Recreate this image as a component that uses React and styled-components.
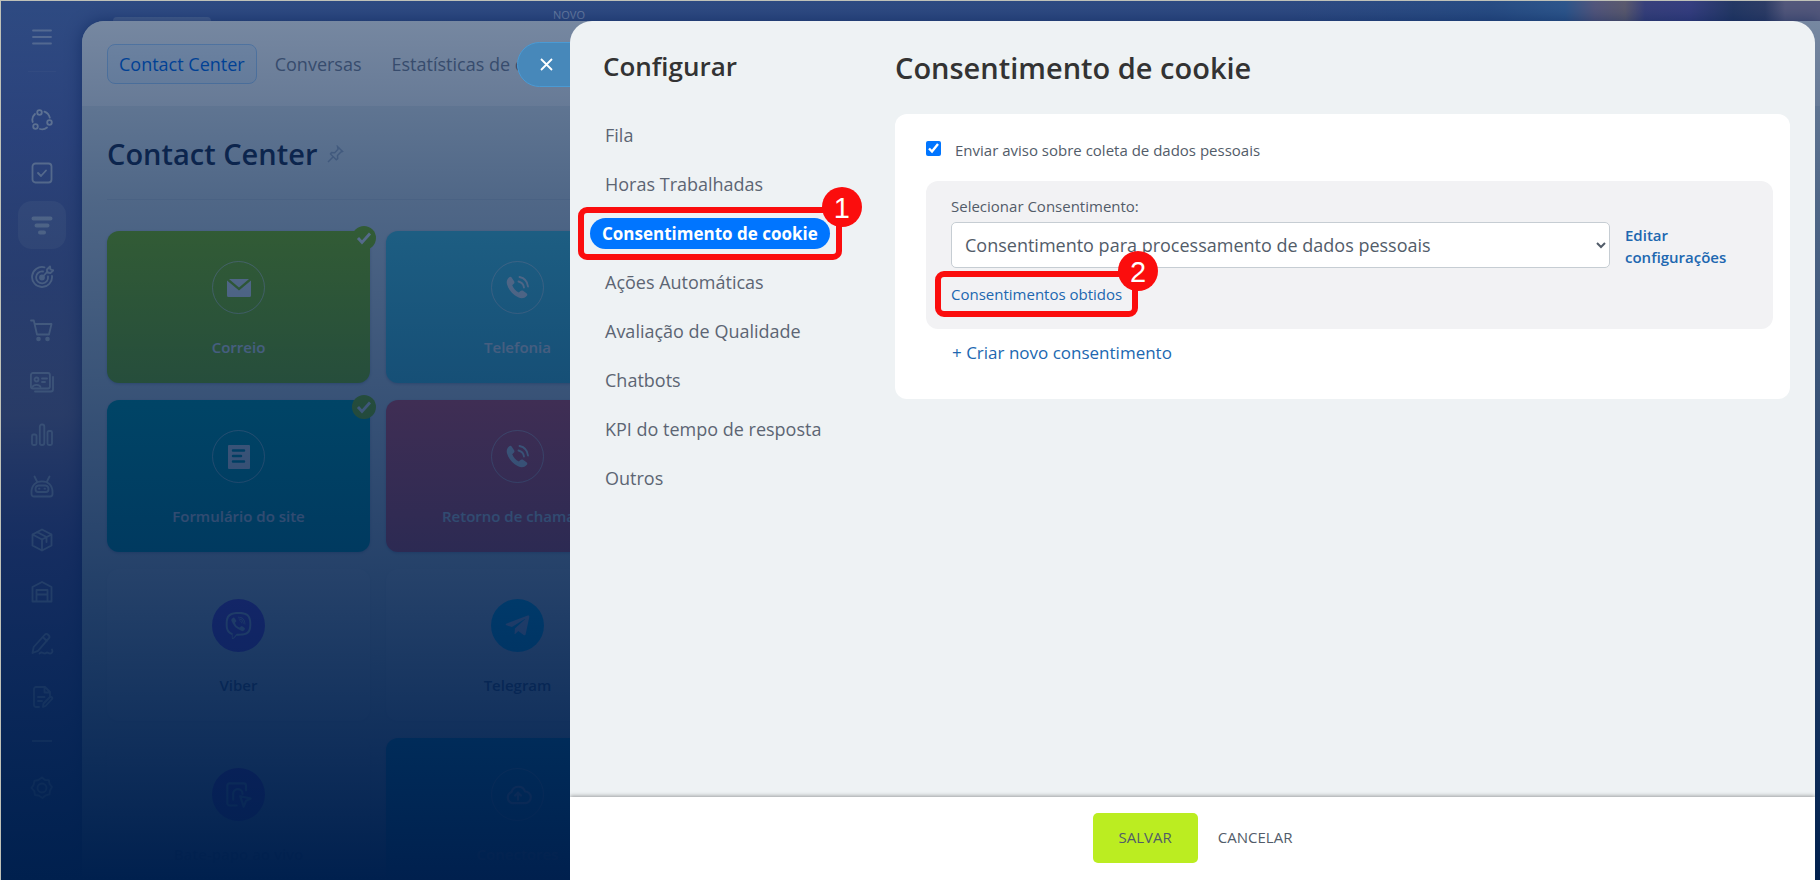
import React from 'react';
import styled, { createGlobalStyle } from 'styled-components';
import { FaViber, FaTelegramPlane } from 'react-icons/fa';

const GlobalStyle = createGlobalStyle`
  *, *::before, *::after {
    box-sizing: border-box;
  }
  body {
    margin: 0;
    font-family: 'Open Sans', 'Noto Sans', sans-serif;
    color: #525c69;
    background: #00204e;
  }
  h1, h2, p, ul {
    margin: 0;
    padding: 0;
  }
  a {
    text-decoration: none;
  }
`;

const Page = styled.div`
  position: relative;
  display: flex;
  height: 100vh;
  overflow: hidden;
  border-top: 1px solid #bfc1b8;
  border-left: 1px solid #bfc1b8;
  background:
    linear-gradient(
      180deg,
      #b9a5c4 0,
      #b59cb2 70px,
      #4a4a40 82px,
      #4a4a48 116px,
      #a68fb8 125px,
      #8a5c9c 170px,
      #4a5aa8 220px,
      #50609a 380px,
      #6070b0 100%
    ) right 0 top 20px / 6px 100% no-repeat,
    linear-gradient(
      90deg,
      transparent 0,
      #5078b8 200px,
      #5a8cc8 275px,
      #a88ca8 305px,
      #b8948c 335px,
      #7060a8 355px,
      #6c5cb0 400px,
      #485078 443px,
      #5a587c 475px,
      #a890a8 495px,
      #a890a8 530px
    ) right 0 top 0 / 530px 20px no-repeat,
    linear-gradient(180deg, #5c74b4 0, #6a74bc 15%, #807cb4 32%, #a890b0 47%, #7a68b0 62%, #6068b0 100%);
`;

const Shade = styled.div`
  position: absolute;
  inset: 0;
  pointer-events: none;
  background: linear-gradient(
    180deg,
    rgba(0, 33, 80, 0.5) 0,
    rgba(0, 33, 80, 0.65) 23%,
    rgba(0, 33, 80, 0.73) 40%,
    rgba(0, 33, 80, 0.82) 61%,
    rgba(0, 33, 80, 0.91) 80%,
    rgba(0, 32, 78, 1) 100%
  );
`;

const Rail = styled.nav`
  display: flex;
  flex-direction: column;
  align-items: center;
  flex: 0 0 81px;
  padding-top: 20px;
`;

const RailButton = styled.button`
  display: flex;
  align-items: center;
  justify-content: center;
  width: 48px;
  height: ${(p) => p.$height || 48}px;
  padding: 0;
  border: 0;
  border-radius: 14px;
  color: #fff;
  opacity: ${(p) => p.$opacity || 0.8};
  background: ${(p) => (p.$active ? 'rgba(255, 255, 255, 0.22)' : 'transparent')};
`;

const RailLine = styled.div`
  width: 28px;
  height: 1px;
  margin-top: 18px;
  background: rgba(255, 255, 255, 0.08);
`;

const RailMore = styled.div`
  width: 20px;
  height: 2px;
  background: rgba(255, 255, 255, 0.8);
`;

const RailList = styled.ul`
  display: flex;
  flex-direction: column;
  flex: 1;
  margin-top: 22px;
  list-style: none;
`;

const RailItem = styled.li`
  display: flex;
  align-items: center;
  flex: 1;
`;

const RailFooter = styled.div`
  display: flex;
  flex-direction: column;
  align-items: center;
  height: 157px;
  padding-top: 17px;
  gap: 22px;
`;

const Workspace = styled.div`
  display: flex;
  flex-direction: column;
  flex: 1;
  min-width: 0;
`;

const TopBar = styled.div`
  display: flex;
  align-items: flex-end;
  height: 20px;
  padding-left: 31px;
`;

const TopField = styled.div`
  width: 98px;
  height: 4px;
  border-radius: 4px 4px 0 0;
  background: rgba(255, 255, 255, 0.3);
`;

const TopLabel = styled.span`
  margin-left: 342px;
  font-size: 11px;
  line-height: 12px;
  color: #d3dbf4;
`;

const Center = styled.section`
  flex: 1;
  overflow: hidden;
  border-top-left-radius: 22px;
  background: #e2e8ec;
  box-shadow: 0 0 16px rgba(0, 20, 80, 0.5);
`;

const CenterHeader = styled.header`
  display: flex;
  align-items: center;
  gap: 6px;
  height: 85px;
  padding: 0 25px;
  background: #f4f5f7;
  white-space: nowrap;
`;

const CenterTab = styled.a`
  padding: 6px 11px;
  border: 1px solid ${(p) => (p.$active ? '#a8d0fa' : 'transparent')};
  border-radius: 8px;
  font-size: 18px;
  line-height: 26px;
  color: ${(p) => (p.$active ? '#0068e8' : '#7a8090')};
  background: ${(p) => (p.$active ? '#e4effb' : 'transparent')};
`;

const CenterTitle = styled.div`
  display: flex;
  align-items: center;
  gap: 10px;
  height: 94px;
  margin: 0 25px;
  padding-top: 3px;
  border-bottom: 1px solid #d3dae2;

  h1 {
    font-size: 29px;
    font-weight: 600;
    line-height: 40px;
    color: #1f2b48;
  }
`;

const Tiles = styled.div`
  display: grid;
  grid-template-columns: repeat(2, 263px);
  grid-auto-rows: 152px;
  gap: 17px 16px;
  padding: 31px 25px 0;
`;

const Tile = styled.article`
  position: relative;
  display: flex;
  flex-direction: column;
  align-items: center;
  padding-top: 30px;
  border-radius: 12px;
  font-size: 15px;
  font-weight: 600;
  line-height: 20px;
  color: ${(p) => (p.$plain ? '#48587c' : '#fff')};
  background: ${(p) => p.$color};
  box-shadow: 0 1px 3px rgba(0, 20, 80, ${(p) => (p.$plain ? 0.08 : 0.25)});
`;

const TileIcon = styled.div`
  display: flex;
  align-items: center;
  justify-content: center;
  width: 53px;
  height: 53px;
  margin-bottom: 23px;
  border: 1px solid ${(p) => (p.$fill ? 'transparent' : 'rgba(255, 255, 255, 0.6)')};
  border-radius: 50%;
  color: ${(p) => (p.$fill ? '#dde4ff' : '#fff')};
  background: ${(p) => p.$fill || 'transparent'};
`;

const TileCheck = styled.span`
  position: absolute;
  top: -5px;
  right: -6px;
  display: flex;
  align-items: center;
  justify-content: center;
  width: 24px;
  height: 24px;
  border-radius: 50%;
  background: #94cf00;
`;

const CloseButton = styled.button`
  position: absolute;
  top: 41px;
  left: 516px;
  display: flex;
  align-items: center;
  width: 60px;
  height: 45px;
  padding: 0 0 0 22px;
  border: 1px solid #4a9ad4;
  border-radius: 23px 0 0 23px;
  color: #fff;
  background: #4788ba;
`;

const Sheet = styled.section`
  position: absolute;
  top: 20px;
  right: 5px;
  bottom: 0;
  left: 569px;
  display: flex;
  flex-direction: column;
  overflow: hidden;
  border-radius: 22px 22px 0 0;
  background: #eef2f4;
`;

const SheetBody = styled.div`
  display: flex;
  flex: 1;
  padding: 27px 25px 0 0;
`;

const SideNav = styled.aside`
  flex: 0 0 325px;
  padding-left: 20px;

  h2 {
    margin: 0 0 27px 13px;
    font-size: 26px;
    font-weight: 600;
    line-height: 36px;
    color: #333;
  }
`;

const NavList = styled.ul`
  list-style: none;
`;

const NavItem = styled.li`
  display: flex;
  align-items: center;
  height: 49px;
`;

const NavLink = styled.a`
  position: relative;
  padding: 0 ${(p) => (p.$active ? 12 : 15)}px;
  border-radius: 16px;
  font-size: ${(p) => (p.$active ? 17 : 18)}px;
  font-weight: ${(p) => (p.$active ? 700 : 400)};
  line-height: 31px;
  white-space: nowrap;
  color: ${(p) => (p.$active ? '#fff' : '#5c6573')};
  background: ${(p) => (p.$active ? '#0075ff' : 'transparent')};
`;

const Callout = styled.span`
  position: absolute;
  inset: ${(p) => p.$inset};
  border: 6px solid #fb0d0d;
  border-radius: 9px;
  pointer-events: none;
`;

const CalloutNumber = styled.span`
  position: absolute;
  top: -26px;
  right: -26px;
  width: 40px;
  height: 40px;
  border-radius: 50%;
  font-family: 'Liberation Sans', Arial, sans-serif;
  font-size: 29px;
  font-weight: 400;
  line-height: 42px;
  text-align: center;
  color: #fff;
  background: #fb0d0d;
`;

const Content = styled.main`
  flex: 1;
  min-width: 0;

  h1 {
    margin-bottom: 26px;
    font-size: 29px;
    font-weight: 600;
    line-height: 40px;
    color: #333;
  }
`;

const Card = styled.form`
  padding: 24px 17px 34px 31px;
  border-radius: 12px;
  background: #fff;
`;

const CheckRow = styled.label`
  display: flex;
  align-items: center;
  gap: 14px;
  font-size: 15px;
  line-height: 24px;

  input {
    width: 15px;
    height: 15px;
    margin: 0 0 3px;
    accent-color: #0075ff;
  }
`;

const ConsentBox = styled.div`
  margin: 19px 0 12px;
  padding: 15px 25px 25px;
  border-radius: 12px;
  font-size: 15px;
  line-height: 20px;
  background: #f2f2f4;
`;

const SelectRow = styled.div`
  display: flex;
  align-items: center;
  gap: 15px;
  margin: 6px 0 16px;
`;

const Select = styled.select`
  flex: 1;
  min-width: 0;
  height: 46px;
  padding: 0 9px;
  border: 1px solid #c6cdd3;
  border-radius: 5px;
  font-family: inherit;
  font-size: 18px;
  color: #525c69;
  background: #fff;
`;

const EditLink = styled.a`
  flex: 0 0 123px;
  padding-top: 2px;
  font-weight: 600;
  line-height: 22px;
  color: #2067b0;
`;

const TextLink = styled.a`
  position: relative;
  display: inline-block;
  color: #2067b0;
  vertical-align: top;
`;

const CreateLink = styled(TextLink)`
  margin-left: 26px;
  font-size: 17px;
  line-height: 24px;
`;

const Footer = styled.footer`
  position: relative;
  display: flex;
  align-items: center;
  justify-content: center;
  gap: 20px;
  height: 83px;
  padding-bottom: 2px;
  background: #fff;
  box-shadow: 0 -1px 4px rgba(0, 0, 0, 0.35);
`;

const FooterButton = styled.button`
  height: 50px;
  padding: 0 ${(p) => (p.$primary ? 26 : 0)}px 2px;
  border: 0;
  border-radius: 5px;
  font-family: inherit;
  font-size: 15px;
  font-weight: 500;
  color: #525c69;
  background: ${(p) => (p.$primary ? '#bbed21' : 'transparent')};
`;

const Glyph = ({ children, size = 24 }) => (
  <svg
    width={size}
    height={size}
    viewBox="0 0 24 24"
    fill="none"
    stroke="currentColor"
    strokeWidth="1.8"
    strokeLinecap="round"
    strokeLinejoin="round"
    aria-hidden="true"
  >
    {children}
  </svg>
);

const PhoneGlyph = () => (
  <svg width="28" height="28" viewBox="0 0 28 28" fill="none" aria-hidden="true">
    <path
      d="M5 3.5c1-1 2-1 2.800.2l2.300 3.600c.6 1 .4 1.800-.4 2.500l-1.500 1.400c1.300 3.300 3.400 5.600 6.600 7.300l1.700-1.500c.8-.7 1.600-.8 2.500-.2l3.500 2.500c1.100.8 1 1.900.1 2.800-2.300 2.500-5.200 2.900-8.500 1.200C8.200 20.300 4.500 15.600 3 10.300 2.300 7.500 3 5.300 5 3.500z"
      fill="currentColor"
    />
    <path
      d="M14.500 7.500c3 .7 5 2.800 5.500 6M15.500 3c4.700 1 8 4.500 8.500 9.500"
      stroke="currentColor"
      strokeWidth="1.800"
      strokeLinecap="round"
    />
  </svg>
);

const MailGlyph = () => (
  <svg width="24" height="18" viewBox="0 0 24 18" fill="currentColor" aria-hidden="true">
    <path d="M2 0h20L12 8.500z" />
    <path d="M0 1.500 12 11.500 24 1.500V16.500a1.500 1.500 0 0 1-1.500 1.500h-21A1.500 1.500 0 0 1 0 16.500z" />
  </svg>
);

const FormGlyph = () => (
  <svg width="22" height="24" viewBox="0 0 22 24" aria-hidden="true">
    <rect width="22" height="24" rx="1" fill="currentColor" />
    <path d="M5 5.500h11M5 11h8M5 16.500h11" stroke="#00a5a5" strokeWidth="2.500" strokeLinecap="round" />
  </svg>
);

const CheckGlyph = () => (
  <svg width="16" height="14" viewBox="0 0 16 14" fill="none" aria-hidden="true">
    <path d="M2 7l4 4.500L14 2.500" stroke="#fff" strokeWidth="2.800" />
  </svg>
);

const PinGlyph = () => (
  <svg width="17" height="18" viewBox="0 0 17 18" fill="none" stroke="#a9b4c6" strokeWidth="1.500" aria-hidden="true">
    <path d="M10.500 1.500l5 5-1.500.5-3.500 3.500.2 3.200-1.400 1L3.500 9l1-1.400 3.200.2L11 4.200zM6 12l-5 5" />
  </svg>
);

const railIcons = [
  {
    name: 'Colaboração',
    icon: (
      <>
        <circle cx="9.500" cy="4.500" r="2.300" />
        <circle cx="19.500" cy="14.500" r="2.300" />
        <circle cx="5.500" cy="18.500" r="2.300" />
        <path d="M14.500 3.700a9 9 0 0 1 5.300 6M17 19.500c-2 1.700-4.500 2.200-7 1.500M2.700 14C1.800 11 2.800 8 5 6" />
      </>
    ),
  },
  { name: 'Tarefas', icon: <><rect x="2.500" y="2.500" width="19" height="19" rx="3" /><path d="M8 12l3 3 5-5.500" /></> },
  {
    name: 'CRM',
    active: true,
    icon: <path d="M3.500 5.500h17M6.500 12.500h11M10 19.500h4" strokeWidth="4" />,
  },
  {
    name: 'Marketing',
    icon: (
      <>
        <path d="M14.500 2.300A10 10 0 1 0 22 11" />
        <path d="M13 6.500a6 6 0 1 0 5 5" />
        <circle cx="12" cy="12.500" r="2" fill="currentColor" />
        <path d="M12.500 12l5-5.500M17 7.500V4.500l3-3 .5 3 3 .8-3 2.700z" />
      </>
    ),
  },
  {
    name: 'Loja',
    icon: (
      <>
        <path d="M1 2.500h2.800L7 16.500h12L21.500 6H5" />
        <circle cx="8.500" cy="21" r="1.400" fill="currentColor" />
        <circle cx="17.500" cy="21" r="1.400" fill="currentColor" />
      </>
    ),
  },
  {
    name: 'Contatos',
    icon: (
      <>
        <rect x="0.900" y="3" width="19" height="15.500" rx="2" />
        <path d="M23 7v12.500c0 1-.7 2-2 2H5M12 8.500h5M12 12h3M2.500 17c1-2.800 7-2.800 8 0" />
        <circle cx="6.500" cy="9.500" r="2" />
      </>
    ),
  },
  {
    name: 'Análises',
    icon: (
      <>
        <rect x="2" y="11.500" width="4.500" height="10.500" rx="1.500" />
        <rect x="9.800" y="1.500" width="4.500" height="20.500" rx="2" />
        <rect x="17.500" y="8" width="4.500" height="14" rx="1.500" />
      </>
    ),
  },
  {
    name: 'Automação',
    icon: (
      <>
        <path d="M4.500 1.500l2.500 5M19.500 1.500l-2.500 5M1.500 17C1.500 10 6 6.300 12 6.300S22.500 10 22.500 17v2a2.500 2.500 0 0 1-2.500 2.500H4A2.500 2.500 0 0 1 1.500 19z" />
        <path d="M8.500 10.500h7a3.500 3.500 0 0 1 3 3.500c0 1.700-1 3-2.500 3H8c-1.500 0-2.500-1.300-2.500-3a3.500 3.500 0 0 1 3-3.500zM9 13.700h.5M14.500 13.700h.5" />
      </>
    ),
  },
  {
    name: 'Estoque',
    icon: <path d="M12 1.500l9.500 5v11L12 22.500l-9.500-5v-11zM2.500 6.500L12 11.500l9.500-5M12 11.500v11M7 4l9.500 5v5" />,
  },
  {
    name: 'Armazém',
    icon: <path d="M2.500 21.500V7L12 2l9.500 5v14.500zM6.500 21.500V10h11v11.500M6.500 14.500h11" />,
  },
  {
    name: 'Assinatura',
    icon: (
      <path d="M2.500 21l1.200-6L15 2.500c1-1 2-.8 2.800 0l1 1c.9.900.9 1.900 0 2.800L8 18.800zM12.800 5l4 4M9.500 21.500c2.500-3 4.500 1.500 6.500-.5 1.500-1.500 2 .5 4 .5s3-1.500 2-4" />
    ),
  },
  {
    name: 'Documentos',
    icon: (
      <path d="M9 22H6a2 2 0 0 1-2-2V4a2 2 0 0 1 2-2h9l5 5v4M14.500 2v5.500H20M8 12h6.500M8 16h4M13 22l.5-3.500 6.500-6.500c1-1 3 1 2 2l-6.500 7z" />
    ),
  },
];

const tiles = [
  { name: 'Correio', color: '#94cf00', icon: <MailGlyph />, done: true },
  { name: 'Telefonia', color: '#56d6e6', icon: <PhoneGlyph /> },
  { name: 'Formulário do site', color: '#00b0aa', icon: <FormGlyph />, done: true },
  { name: 'Retorno de chamada', color: '#ff5560', icon: <PhoneGlyph /> },
  { name: 'Viber', color: '#e9edf1', plain: true, fill: '#8040ec', icon: <FaViber size={27} /> },
  { name: 'Telegram', color: '#e9edf1', plain: true, fill: '#00c8ff', icon: <FaTelegramPlane size={27} /> },
  {
    name: 'Bate-papo ao vivo',
    color: '#e4e9ee',
    plain: true,
    fill: '#8a20e0',
    icon: (
      <Glyph size={28}>
        <path d="M10 21H4a2 2 0 0 1-2-2V4a2 2 0 0 1 2-2h12a2 2 0 0 1 2 2v4M7 16v-5a4 4 0 0 1 8 0M13 13l9 2-4 2-2 5z" />
      </Glyph>
    ),
  },
  {
    name: 'Conectores',
    color: '#00b4d5',
    icon: (
      <Glyph size={28}>
        <path d="M7 19a5 5 0 0 1-.5-9.500A6 6 0 0 1 18 9a5 5 0 0 1 0 10zM12 16v-6M9.500 12.500L12 10l2.500 2.500" />
      </Glyph>
    ),
  },
];

const navItems = [
  'Fila',
  'Horas Trabalhadas',
  'Consentimento de cookie',
  'Ações Automáticas',
  'Avaliação de Qualidade',
  'Chatbots',
  'KPI do tempo de resposta',
  'Outros',
];

const ContactCenter = () => (
  <Center>
    <CenterHeader>
      <CenterTab href="#" $active>Contact Center</CenterTab>
      <CenterTab href="#">Conversas</CenterTab>
      <CenterTab href="#">Estatísticas de conversas</CenterTab>
    </CenterHeader>
    <CenterTitle>
      <h1>Contact Center</h1>
      <PinGlyph />
    </CenterTitle>
    <Tiles>
      {tiles.map((tile) => (
        <Tile key={tile.name} $color={tile.color} $plain={tile.plain}>
          <TileIcon $fill={tile.fill}>{tile.icon}</TileIcon>
          {tile.name}
          {tile.done && (
            <TileCheck>
              <CheckGlyph />
            </TileCheck>
          )}
        </Tile>
      ))}
    </Tiles>
  </Center>
);

const SettingsSheet = () => (
  <Sheet>
    <SheetBody>
      <SideNav>
        <h2>Configurar</h2>
        <NavList>
          {navItems.map((item, i) => (
            <NavItem key={item}>
              <NavLink href="#" $active={i === 2}>
                {item}
                {i === 2 && (
                  <Callout $inset="-11px -12px">
                    <CalloutNumber>1</CalloutNumber>
                  </Callout>
                )}
              </NavLink>
            </NavItem>
          ))}
        </NavList>
      </SideNav>
      <Content>
        <h1>Consentimento de cookie</h1>
        <Card>
          <CheckRow>
            <input type="checkbox" defaultChecked />
            Enviar aviso sobre coleta de dados pessoais
          </CheckRow>
          <ConsentBox>
            <label htmlFor="consent">Selecionar Consentimento:</label>
            <SelectRow>
              <Select id="consent">
                <option>Consentimento para processamento de dados pessoais</option>
              </Select>
              <EditLink href="#">Editar configurações</EditLink>
            </SelectRow>
            <TextLink href="#">
              Consentimentos obtidos
              <Callout $inset="-13px -16px">
                <CalloutNumber>2</CalloutNumber>
              </Callout>
            </TextLink>
          </ConsentBox>
          <CreateLink href="#">+ Criar novo consentimento</CreateLink>
        </Card>
      </Content>
    </SheetBody>
    <Footer>
      <FooterButton type="button" $primary>SALVAR</FooterButton>
      <FooterButton type="button">CANCELAR</FooterButton>
    </Footer>
  </Sheet>
);

const App = () => (
  <>
    <GlobalStyle />
    <Page>
      <Rail>
        <RailButton $height={32} $opacity={0.5} aria-label="Menu">
          <Glyph><path d="M3 5.500h18M3 12h18M3 18.500h18" /></Glyph>
        </RailButton>
        <RailLine />
        <RailList>
          {railIcons.map((item) => (
            <RailItem key={item.name}>
              <RailButton $active={item.active} aria-label={item.name}>
                <Glyph>{item.icon}</Glyph>
              </RailButton>
            </RailItem>
          ))}
        </RailList>
        <RailFooter>
          <RailMore />
          <RailButton $opacity={1} aria-label="Configurações">
            <Glyph>
              <circle cx="12" cy="12" r="4.500" />
              <path d="M12 1.500l3 2.500 3.800.2.800 3.800 2.400 3-2 3.500-.5 3.800-3.800 1-3.200 2.700-3.500-2.300-4-.7-.7-3.800L1.500 12l2.200-3.300.7-3.900 4-.8z" />
            </Glyph>
          </RailButton>
        </RailFooter>
      </Rail>
      <Workspace>
        <TopBar>
          <TopField />
          <TopLabel>NOVO</TopLabel>
        </TopBar>
        <ContactCenter />
      </Workspace>
      <Shade />
      <CloseButton aria-label="Fechar">
        <svg width="13" height="13" viewBox="0 0 13 13" stroke="currentColor" strokeWidth="1.800" aria-hidden="true">
          <path d="M1 1l11 11M12 1L1 12" />
        </svg>
      </CloseButton>
      <SettingsSheet />
    </Page>
  </>
);

export default App;
